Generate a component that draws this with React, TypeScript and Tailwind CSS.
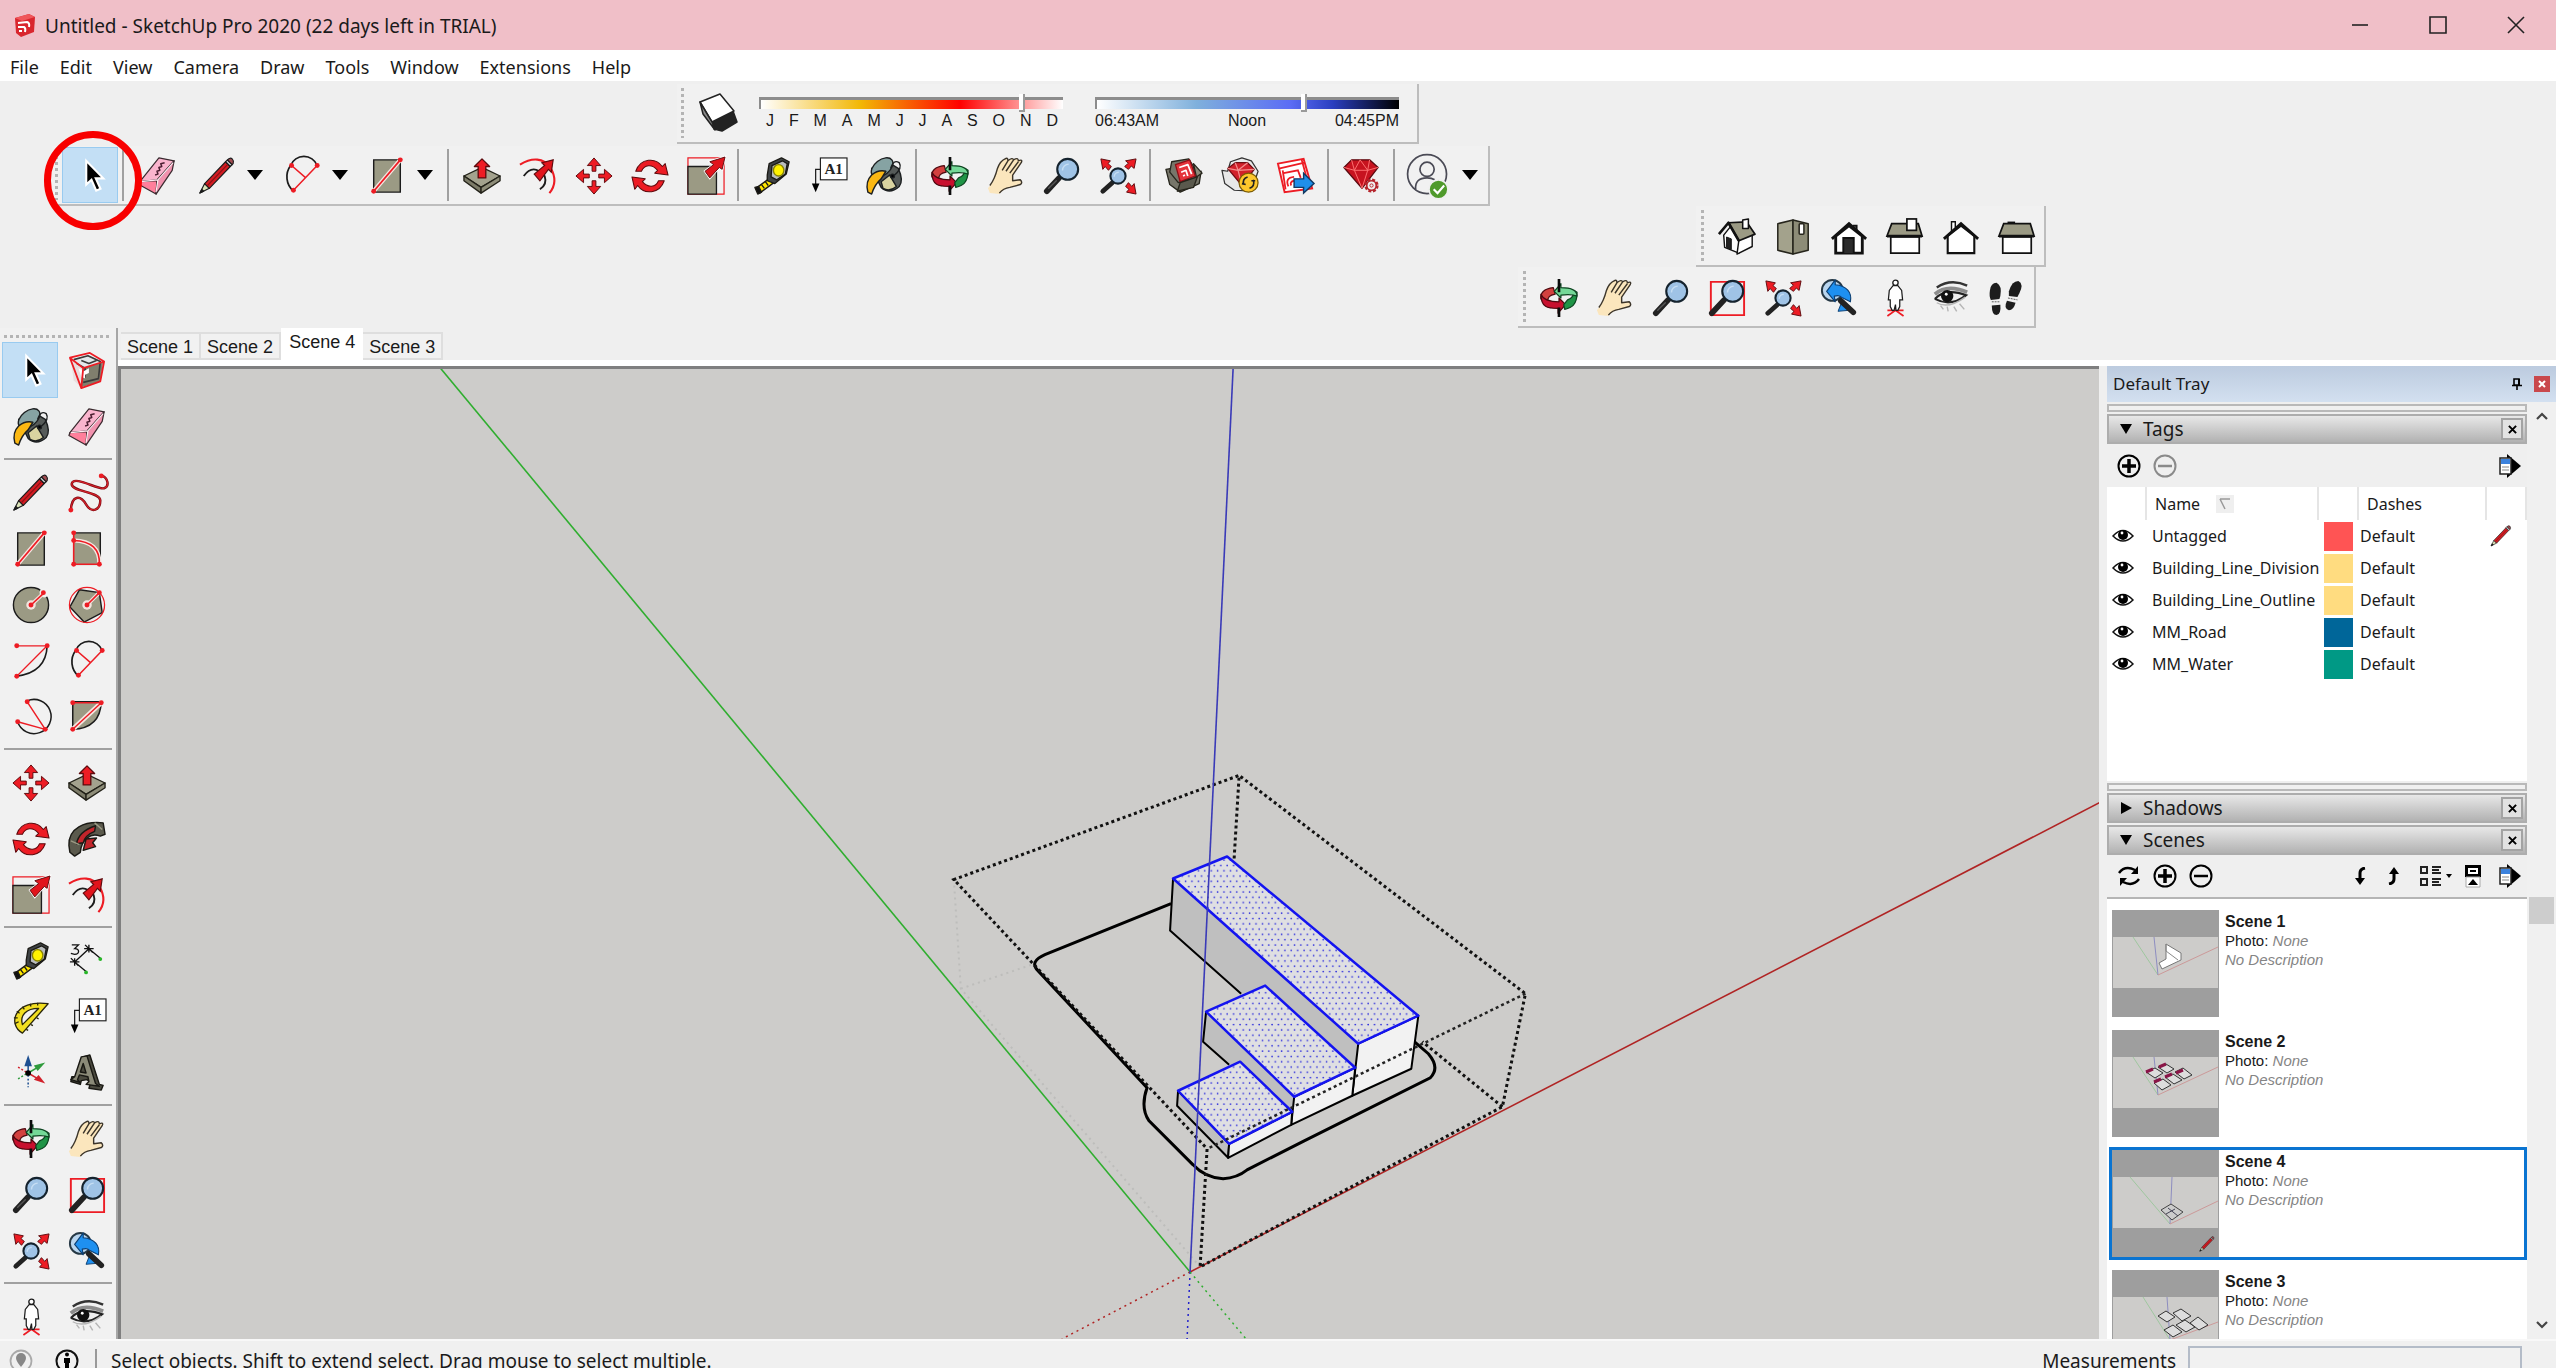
import type { ReactNode } from "react";

const INK = "#1c1c1c";
const RED = "#ed1c24";
const STONE = "#9b9a84";

const Dot = ({ x, y }: { x: number; y: number }) => <circle cx={x} cy={y} r="2.6" fill={RED} />;

const Lens = ({ cx, cy, r }: { cx: number; cy: number; r: number }) => (
  <g>
    <circle cx={cx} cy={cy} r={r} fill="#9fc3e6" stroke="#15232e" strokeWidth="2.2" />
    <path d={`M${cx - r * 0.5} ${cy + r * 0.1}a${r * 0.6} ${r * 0.6} 0 0 1 ${r * 0.6}-${r * 0.6}`} fill="none" stroke="#c5ddf3" strokeWidth="1.5" />
  </g>
);

const Pencil = () => (
  <g stroke={INK} strokeWidth="1.2" strokeLinejoin="round">
    <path d="M2 38L7 28L12 33Z" fill="#dbe3b8" />
    <path d="M2 38l2-4l2 2Z" fill="#111" />
    <path d="M7 28L29 5L34 10L12 33Z" fill="#d31c22" />
    <path d="M29 5l2-2l5 5l-2 2Z" fill="#c9ced2" />
    <path d="M31 3q3-3 5-1t1 5l-1 1Z" fill="#a04b50" />
    <path d="M10 30L31 8" stroke="#8d0f14" fill="none" />
  </g>
);

const ICONS: Record<string, ReactNode> = {
  select: <path d="M15 4v25l5.500-5l5 11.500l4.500-2l-5-11h8Z" fill="#000" stroke="#fff" strokeWidth="2.200" />,
  eraser: (
    <g stroke="#3a2a2f" strokeWidth="1.300" strokeLinejoin="round">
      <path d="M2 26L22 1L38 4L20 24Z" fill="#f9b4cd" />
      <path d="M2 26L20 25L19 39L1 29Z" fill="#ff7f9b" />
      <path d="M20 25L38 4L36 14L19 39Z" fill="#f192ae" />
      <path d="M3 26L21 24L37 6M21 24L19 37" stroke="#ffe9f1" fill="none" />
      <path d="M18 19l3-1l-1-3l3-1l-1-3l3-1l-1-3l4-1" fill="none" stroke="#4b1e31" strokeWidth="1.600" />
    </g>
  ),
  pencil: <Pencil />,
  arc: (
    <g fill="none">
      <path d="M11 36A20 20 0 0 1 8 9A15 15 0 0 1 36 9" stroke={INK} strokeWidth="1.800" />
      <path d="M36 9L11 35M9 9L24 22" stroke={RED} strokeWidth="1.600" />
      <Dot x={36} y={9} /><Dot x={9} y={9} /><Dot x={11} y={35} />
    </g>
  ),
  rect: (
    <g>
      <path d="M6 3H34V37H6Z" fill={STONE} stroke={INK} strokeWidth="1.500" />
      <path d="M6 36L34 3" stroke="#f6e7e2" strokeWidth="4.500" />
      <path d="M6 36L34 3" stroke={RED} strokeWidth="1.800" />
      <Dot x={6} y={36} /><Dot x={34} y={3} />
    </g>
  ),
  rotrect: (
    <g fill="none">
      <path d="M6 3H34V37H6Z" fill={STONE} />
      <path d="M8 3H34V32" stroke={INK} strokeWidth="1.500" />
      <path d="M6 11Q34 12 33 36" stroke="#f6e7e2" strokeWidth="4.500" />
      <path d="M6 3V36H33Q34 12 6 11" stroke={RED} strokeWidth="1.700" />
      <Dot x={6} y={3} /><Dot x={6} y={11} /><Dot x={6} y={36} /><Dot x={33} y={36} />
    </g>
  ),
  circle: (
    <g>
      <circle cx="20" cy="20" r="18.500" fill={STONE} stroke={INK} strokeWidth="1.500" />
      <circle cx="20" cy="20" r="5" fill="#f2e4de" /><circle cx="34" cy="7" r="5" fill="#f2f2f2" />
      <path d="M20 20L34 7" stroke="#f2e4de" strokeWidth="4" />
      <path d="M20 20L34 7" stroke={RED} strokeWidth="1.700" />
      <Dot x={20} y={20} /><Dot x={33} y={7} />
    </g>
  ),
  polygon: (
    <g>
      <path d="M12 4L33 7L36 28L17 38L2 22Z" fill={STONE} stroke={INK} strokeWidth="1.500" />
      <circle cx="20" cy="20" r="18.500" fill="none" stroke={RED} strokeWidth="1.300" />
      <circle cx="20" cy="20" r="5" fill="#f2e4de" />
      <path d="M20 20L33 7" stroke="#f2e4de" strokeWidth="4" />
      <path d="M20 20L33 7" stroke={RED} strokeWidth="1.700" />
      <Dot x={20} y={20} /><Dot x={33} y={7} />
    </g>
  ),
  arc1: (
    <g fill="none">
      <path d="M5 36Q36 32 37 4" stroke={INK} strokeWidth="1.700" />
      <path d="M5 4H37L5 36" stroke={RED} strokeWidth="1.300" />
      <Dot x={5} y={4} /><Dot x={37} y={4} /><Dot x={5} y={36} />
    </g>
  ),
  arc3: (
    <g fill="none">
      <path d="M16 3A18 18 0 1 1 6 25" stroke={INK} strokeWidth="1.600" />
      <path d="M16 4L35 33L6 25" stroke={RED} strokeWidth="1.500" />
      <Dot x={16} y={4} /><Dot x={35} y={33} /><Dot x={6} y={25} />
    </g>
  ),
  pie: (
    <g fill="none">
      <path d="M5 4H35Q34 32 5 33Z" fill={STONE} stroke={INK} strokeWidth="1.600" />
      <path d="M35 5L5 33" stroke="#f6e7e2" strokeWidth="5" />
      <path d="M5 33L35 5H5" stroke={RED} strokeWidth="1.500" />
      <Dot x={5} y={5} /><Dot x={35} y={5} /><Dot x={5} y={33} />
    </g>
  ),
  freehand: (
    <g fill="none">
      <path d="M3 38C4 22 13 22 19 32S34 38 34 28S2 19 4 10S32 17 38 15S42 4 36 2" stroke="#7d0c12" strokeWidth="2.600" />
      <path d="M3 38C4 22 13 22 19 32S34 38 34 28S2 19 4 10S32 17 38 15S42 4 36 2" stroke="#d5202a" strokeWidth="1.200" />
      <Dot x={3} y={38} /><Dot x={35} y={2} />
    </g>
  ),
  pushpull: (
    <g stroke="#222118" strokeWidth="1.400" strokeLinejoin="round">
      <path d="M1 20L20 11L39 20L19 32Z" fill="#a3a28e" />
      <path d="M1 20L19 32V38L1 25Z" fill="#7c7b68" />
      <path d="M19 32L39 20V25L19 38Z" fill="#8e8d79" />
      <path d="M16 22V10H12L20 2L28 10H24V22Z" fill={RED} stroke="#5e0a0d" />
    </g>
  ),
  offset: (
    <g fill="none">
      <path d="M5 20Q15 6 27 20Q30 29 22 34" stroke={INK} strokeWidth="2" />
      <path d="M1 8C14 0 26 1 33 11Q42 26 32 38" stroke={RED} strokeWidth="2.200" />
      <path d="M16 18L27 9L24 6L36 3L34 16L31 13L22 25Z" fill="#e1141c" stroke="#5e0a0d" strokeWidth="1.200" />
    </g>
  ),
  move: (
    <g fill={RED} stroke="#5e0a0d" strokeWidth="1">
      {[0, 90, 180, 270].map((a) => (
        <path key={a} transform={`rotate(${a} 20 20)`} d="M18 15V9H13L20 1L27 9H22V15Z" />
      ))}
    </g>
  ),
  rotate: (
    <g fill={RED} stroke="#5e0a0d" strokeWidth="1.100" strokeLinejoin="round">
      <path d="M5 15C10 1 26 0 33 10L36 7L39 19L25 17L28 14C22 7 14 8 11 15Z" />
      <path d="M35 25C30 39 14 40 7 30L4 34L1 21L15 23L12 26C18 33 26 32 29 25Z" />
    </g>
  ),
  scale: (
    <g>
      <path d="M1 1H39V39H1Z" fill="none" stroke={RED} strokeWidth="1.300" />
      <path d="M1 10H31V39H1Z" fill={STONE} stroke={INK} strokeWidth="1.400" />
      <path d="M19 15L28 8L24 5L40 0L37 13L34 11L24 22Z" fill="#e1141c" stroke="#fff" strokeWidth="2.400" />
      <path d="M19 15L28 8L24 5L40 0L37 13L34 11L24 22Z" fill="#e1141c" stroke="#5e0a0d" />
    </g>
  ),
  followme: (
    <g stroke="#1b1a15" strokeWidth="1.500" strokeLinejoin="round">
      <path d="M1 27C0 8 18 1 37 3L39 15L34 17C24 13 14 20 13 34L7 38L2 34Z" fill="#5b5a4d" />
      <path d="M9 25Q11 12 29 6L28 12Q18 16 16 24Z" fill="#c3252b" />
      <path d="M19 20L16 32L29 28L26 24L30 19Z" fill="#c3252b" />
      <path d="M28 3l8 7M3 22l9 4" stroke="#9b9a84" fill="none" />
    </g>
  ),
  tape: (
    <g stroke="#1b1a15" strokeWidth="1.400" strokeLinejoin="round">
      <path d="M3 33L18 22L22 27L7 38Z" fill="#ffe600" />
      <path d="M2 32l3 7l4-2l-3-6Z" fill="#111" />
      <path d="M9 29l3 4M13 26l3 4" fill="none" />
      <path d="M15 19L17 7L30 1L38 5L35 18L23 28L15 25Z" fill="#3f4345" />
      <path d="M20 9L31 4L36 7L34 18L25 24L19 21Z" fill="#b9bcbe" />
      <ellipse cx="27" cy="14" rx="5.500" ry="6" fill="#fff200" stroke="#8a8400" />
    </g>
  ),
  dimension: (
    <g stroke="#111" strokeWidth="1.400" fill="none">
      <path d="M7 21L22 7M7 21L19 31M22 7L34 17M3 17l8 8M18 3l8 8M2 21h10M17 7h10M7 17v8M22 3v8" />
      <path d="M4 3h7l-4 4c6 0 5 6 0 6l-4-1" />
      <circle cx="34" cy="18" r="2" fill="#28b628" stroke="none" /><circle cx="19" cy="32" r="2" fill="#28b628" stroke="none" />
    </g>
  ),
  protractor: (
    <g stroke="#28250b" strokeWidth="1.400" strokeLinejoin="round">
      <path d="M11 37C-5 28 2 1 38 6Z" fill="#f2df21" />
      <path d="M11 28C8 18 15 11 28 11Z" fill="#f2f2f2" />
      <path d="M3 27l4-2M2 21l4 0M5 14l3 2M11 9l2 3M19 6l1 3M27 5v3M15 33l2 1M20 28l2 1M26 21l2 1" fill="none" />
    </g>
  ),
  text: (
    <g>
      <rect x="12" y="1" width="28" height="23" fill="#fff" stroke={INK} strokeWidth="1.200" />
      <text x="26" y="18" textAnchor="middle" fontSize="16" fontFamily="'Liberation Serif', serif" fontWeight="700" fill="#222">A1</text>
      <path d="M12 13H7V30" fill="none" stroke={INK} strokeWidth="1.300" />
      <path d="M3 28H11L7 37Z" fill="#000" />
    </g>
  ),
  axes: (
    <g fill="none" strokeWidth="1.600">
      <path d="M17 20V8" stroke="#1d4f91" /><path d="M13 13L17 1L21 13Z" fill="#1d4f91" />
      <path d="M17 20L27 14" stroke="#2e9a3b" /><path d="M23 12L35 9L27 18Z" fill="#2e9a3b" />
      <path d="M17 20L27 26" stroke="#d2202a" /><path d="M23 27L35 31L28 22Z" fill="#d2202a" />
      <path d="M17 22V35" stroke="#1d4f91" strokeDasharray="2 2" />
      <path d="M15 21L5 27" stroke="#2e9a3b" strokeDasharray="2 2" />
      <path d="M15 19L5 13" stroke="#d2202a" strokeDasharray="2 2" />
      <circle cx="17" cy="20" r="3" fill="#000" />
    </g>
  ),
  text3d: (
    <g stroke="#191813" strokeWidth="1.500" strokeLinejoin="round" fillRule="evenodd">
      <path d="M16 3L23 1L33 32L37 33L35 38L22 36L24 30L20 27L14 28L13 32L3 29L4 24L8 24Z" fill="#4b4a3f" />
      <path d="M14 3L20 2L29 31L33 34L19 32L22 29L21 24L12 22L10 27L13 30L3 27L7 24ZM16 10L13 19L19 20Z" fill="#8b8a78" />
    </g>
  ),
  orbit: (
    <g strokeWidth="1.300" strokeLinejoin="round">
      <path d="M14 9C4 10 0 15 1 21L8 24C8 19 10 17 16 16Z" fill="#d3413f" stroke="#4d0a10" />
      <path d="M1 16C1 30 8 31 19 31V36L27 27L20 20V24C9 24 3 21 1 16Z" fill="#c8102e" stroke="#4d0a10" />
      <path d="M39 14C39 28 33 30 26 32L25 27L29 22C34 20 36 17 36 12Z" fill="#1f9446" stroke="#0d4420" />
      <path d="M15 13L22 5V9C33 9 39 12 39 18C34 16 29 16 22 17V20Z" fill="#74d897" stroke="#0d4420" />
      <path d="M20 0V14M20 30V40" stroke="#0b0b0b" strokeWidth="2.800" />
    </g>
  ),
  hand: (
    <g strokeLinejoin="round">
      <path d="M1 33C6 27 9 20 11 12Q14 4 19 2Q22 0 22 4Q27 0 28 3Q33 0 33 4Q38 2 36 6L27 19V25L35 24Q38 27 35 29L24 32Q17 33 13 39L3 38Z" fill="#fbe6bd" />
      <path d="M3 30C7 25 9 20 11 12Q14 4 19 2Q22 0 22 4Q27 0 28 3Q33 0 33 4Q38 2 36 6L27 19V25L35 24Q38 27 35 29L24 32Q17 33 13 38M22 4L16 14M28 3L20 15M33 5L24 17" fill="none" stroke="#3c352a" strokeWidth="1.500" />
    </g>
  ),
  zoom: (
    <g>
      <path d="M4 36L17 22" stroke="#222" strokeWidth="6" strokeLinecap="round" />
      <path d="M6 33L14 25" stroke="#555" strokeWidth="1.500" strokeLinecap="round" />
      <Lens cx={26} cy={13} r={11} />
    </g>
  ),
  zoomwindow: (
    <g>
      <path d="M3 3H38V38H3Z" fill="none" stroke={RED} strokeWidth="2" />
      <path d="M4 36L17 22" stroke="#222" strokeWidth="6" strokeLinecap="round" />
      <Lens cx={26} cy={13} r={11} />
    </g>
  ),
  extents: (
    <g>
      <path d="M4 36L14 27" stroke="#222" strokeWidth="5" strokeLinecap="round" />
      <Lens cx={20} cy={20} r={8} />
      {[0, 90, 270].map((a) => (
        <path key={a} transform={`rotate(${a} 20.500 20.500)`} d="M39 2L37 12L34 9.500L31 13L27 10L31 6.500L28 4Z" fill={RED} stroke="#5e0a0d" />
      ))}
    </g>
  ),
  previous: (
    <g strokeLinejoin="round">
      <circle cx="13" cy="12" r="11" fill="#b9d5ee" stroke="#263845" strokeWidth="2" />
      <path d="M7 13L16 1V6C28 7 34 14 32 24L22 19C21 17 19 17 15 18L16 24Z" fill="#1e90f0" stroke="#0c3f73" strokeWidth="1.200" />
      <path d="M19 34L23 24L30 33Z" fill="#1e90f0" stroke="#0c3f73" />
      <path d="M22 23L35 35" stroke="#222" strokeWidth="6" strokeLinecap="round" />
    </g>
  ),
  position: (
    <g>
      <path d="M12 39L20.500 33L29 39M12 33H29" fill="none" stroke={RED} strokeWidth="1.800" />
      <circle cx="20.500" cy="4" r="2.800" fill="#fff" stroke={INK} strokeWidth="1.400" />
      <path d="M18 7H23L27 12L28 22H25V29L23 33H21L20.500 27L19 33H17L15 29V22H13L14 12Z" fill="#fff" stroke={INK} strokeWidth="1.300" />
    </g>
  ),
  look: (
    <g fill="none">
      <path d="M5 9Q20-1 37 7" stroke="#333" strokeWidth="2.500" />
      <path d="M3 16Q16 5 37 14" stroke="#8c8c8c" strokeWidth="4" />
      <path d="M3 21Q14 9 36 17Q20 30 3 21" fill="#eee" stroke="#222" strokeWidth="2.200" />
      <circle cx="16" cy="18" r="6.500" fill="#111" /><circle cx="15" cy="16" r="1.500" fill="#fff" />
      <path d="M5 25Q17 32 35 19M9 28l3 4M16 29l1 5M23 29l3 5M29 26l5 6" stroke="#b5b5b5" strokeWidth="1.500" />
    </g>
  ),
  walk: (
    <g fill="#1d1d1d">
      <path d="M2 12Q3 4 9 4Q15 7 13 18L12 21L3 22Q1 18 2 12Z" /><path d="M4 28L13 27Q14 37 9 38Q4 38 4 28Z" />
      <path d="M22 13Q25 2 32 2Q38 5 33 15L31 19L22 18Z" /><path d="M20 23L29 25Q27 33 22 33Q16 31 20 23Z" />
      <path d="M4 24h9M21 20l10 2" stroke="#555" strokeDasharray="2 1" />
    </g>
  ),
  component: (
    <g strokeLinejoin="round">
      <path d="M3 7L16 17L14 37L6 30Z" fill="#e8dede" /><path d="M16 17L37 10L34 31L14 37Z" fill="#807f6e" />
      <path d="M5 8L21 3L36 10L16 16Z" fill="#e4e8ea" />
      <path d="M6 8L21 4L34 10L32 28L16 32M9 12l9 5v10M14 9l8 3l8-3" fill="none" stroke="#3a3a3a" strokeWidth="1.700" />
      <path d="M11 17l6 3l5-3v5l-4 2v4l-4-2Z" fill="#fff" />
      <path d="M2 6L23 1L38 10L16 17ZM2 6L14 38L34 31L38 10M16 17L14 38" fill="none" stroke={RED} strokeWidth="1.900" />
    </g>
  ),
  paint: (
    <g strokeLinejoin="round" stroke="#1c1f20" strokeWidth="1.500">
      <path d="M7 12L17 32Q26 40 36 31Q41 25 35 12L22 4Z" fill="#565b59" />
      <path d="M17 26L26 19L33 31Q26 37 19 33Z" fill="#d9d3a0" />
      <ellipse cx="18" cy="11" rx="13" ry="8" transform="rotate(-38 18 11)" fill="#86a3a3" />
      <path d="M22 15Q14 13 7 19Q0 26 3 37L7 39Q10 29 17 23Z" fill="#fbb813" />
      <path d="M27 12Q30 2 36 6Q40 12 30 20" fill="none" />
      <circle cx="29" cy="20" r="2" fill="#000" />
    </g>
  ),
  warehouse: (
    <g strokeLinejoin="round" stroke="#26251c" strokeWidth="1.400">
      <path d="M1 13L7 12L16 25L33 19L38 15L36 28L16 37L5 29Z" fill="#77766a" />
      <path d="M7 5L25 2L30 10L32 22L14 27L5 16Z" fill="#77766a" />
      <path d="M30 7L39 17L33 21Z" fill="#8d8c7b" />
      <path d="M11 8L26 3L32 20L16 26Z" fill="#e5333b" stroke="#8e1017" />
      <path d="M15 11L24 8L28 18M17 16l5-2l2 6M19 20l2-1" fill="none" stroke="#fff" strokeWidth="1.800" />
      <path d="M16 27L34 21L30 32L13 36Z" fill="#5a594d" />
    </g>
  ),
  extwarehouse: (
    <g strokeLinejoin="round" stroke="#333" strokeWidth="1.300">
      <path d="M1 14L7 15L10 5L22 1L32 4L39 15L32 36L14 35L4 28Z" fill="#e8e8e8" />
      <path d="M7 12L15 6L28 6L35 13L22 30Z" fill="#d2202a" stroke="#6d0c12" />
      <path d="M7 12L18 14L35 13M15 6L18 14L28 6M18 14L22 30" fill="none" stroke="#f38d8d" />
      <circle cx="29" cy="27" r="10" fill="#fdc72c" stroke="#7a5a00" />
      <path d="M24 29Q22 23 28 21M34 24Q36 31 30 33M22 28l4 1M32 25l4 0" fill="none" stroke="#222" strokeWidth="1.700" />
    </g>
  ),
  layout: (
    <g>
      <path d="M1 7L28 2L37 33L8 37Z" fill="#fff" stroke={RED} strokeWidth="2" />
      <path d="M3 12L29 6M26 3L34 32M7 17L22 14L25 22M9 34L6 14M12 31Q8 22 18 21M15 30Q13 26 18 25" fill="none" stroke={RED} strokeWidth="1.900" />
      <path d="M18 23H28V17L39 28L28 38V32H18Z" fill="#1f8fea" stroke="#123a63" strokeWidth="1.500" />
    </g>
  ),
  ruby: (
    <g strokeLinejoin="round">
      <path d="M1 11L9 3L28 3L37 11L20 33Z" fill="#c7131f" stroke="#5b0a10" strokeWidth="1.400" />
      <path d="M1 11L12 14L26 14L37 11M9 3L12 14L18 3L26 14L28 3M12 14L20 33L26 14" fill="none" stroke="#ff7474" />
      <circle cx="30" cy="30" r="6" fill="#fff" stroke="#b5252c" strokeWidth="3" strokeDasharray="3 1.700" />
      <circle cx="30" cy="30" r="5" fill="#f0f0f0" stroke="#b5252c" strokeWidth="1.800" /><circle cx="30" cy="30" r="1.700" fill="none" stroke="#b5252c" />
    </g>
  ),
  user: (
    <g fill="none" stroke="#4a4a55" strokeWidth="1.800">
      <circle cx="19" cy="18" r="20.500" /><circle cx="19" cy="13" r="7.500" />
      <path d="M7 34Q6 22 19 22Q24 22 27 24" />
      <circle cx="31" cy="34" r="10" fill="#4f9a2b" stroke="#efefef" /><path d="M26 34l4 4l7-8" stroke="#fff" strokeWidth="2.200" />
    </g>
  ),
  iso: (
    <g stroke="#111" strokeLinejoin="round">
      <path d="M6 18L14 8L22 21V37L7 31Z" fill="#fff" strokeWidth="1.500" /><path d="M22 23L36 15V30L20 38Z" fill="#fff" strokeWidth="1.500" />
      <path d="M9 20L14 22V33L9 31Z" fill="#222" />
      <path d="M11 5L30 4L39 17L22 24Z" fill={STONE} strokeWidth="1.800" /><path d="M1 17L11 5L22 24" fill="none" strokeWidth="2.800" />
      <path d="M26 2L32 1V11H26Z" fill="#fff" strokeWidth="1.600" />
    </g>
  ),
  top: (
    <g stroke="#26251c" strokeWidth="1.600" strokeLinejoin="round">
      <path d="M4 6L20 2V38L4 34Z" fill="#a3a28c" /><path d="M20 2L36 6V34L20 38Z" fill="#8d8c77" />
      <rect x="26.500" y="6" width="5" height="11" rx="1" fill="#fff" />
    </g>
  ),
  front: (
    <g stroke="#111" strokeLinejoin="miter">
      <path d="M24 8H28V14" fill="#777" strokeWidth="2" />
      <path d="M6 19L20 8L34 19V37H6Z" fill="#fff" strokeWidth="3" /><path d="M14 37V21H25V37" fill="#2b2b2b" strokeWidth="2" />
      <path d="M2 22L20 6L38 22" fill="none" strokeWidth="3" />
    </g>
  ),
  right: (
    <g stroke="#111" strokeWidth="1.800">
      <path d="M5 20H35V37H5Z" fill="#fff" /><path d="M6 6H34L38 19H1Z" fill={STONE} /><path d="M1 19H38" strokeWidth="3" /><rect x="22" y="1" width="10" height="12" fill="#fff" />
    </g>
  ),
  back: (
    <g stroke="#111">
      <path d="M10 14V4H14V10" fill="#fff" strokeWidth="1.500" />
      <path d="M6 19L20 8L34 19V37H6Z" fill="#fff" strokeWidth="2.200" /><path d="M2 22L20 6L38 22" fill="none" strokeWidth="3" />
    </g>
  ),
  left: (
    <g stroke="#111" strokeWidth="1.800">
      <path d="M10 5H18" strokeWidth="2.500" /><path d="M5 20H35V37H5Z" fill="#fff" /><path d="M6 6H34L38 19H1Z" fill={STONE} /><path d="M1 19H38" strokeWidth="3" />
    </g>
  ),
  shadow: (
    <g stroke="#222" strokeWidth="1.500" strokeLinejoin="round">
      <path d="M14 29L35 18L39 29L24 38L16 36Z" fill="#222" /><path d="M2 9L22 1L36 18L14 29Z" fill="#fff" />
      <path d="M2 9L14 29L17 37L5 21Z" fill="#8b8b8b" />
    </g>
  ),
};

const Icon = ({ name, className = "size-10" }: { name: string; className?: string }) => (
  <svg viewBox="0 0 40 40" className={`${className} shrink-0 overflow-visible`} aria-hidden="true">
    {ICONS[name]}
  </svg>
);

function ToolButton({ name, selected }: { name: string; selected?: boolean }) {
  return (
    <button
      aria-label={name}
      aria-pressed={selected}
      className={`flex h-14 w-14 shrink-0 items-center justify-center border pt-[2px] pl-[2px] ${selected ? "border-[#99cbf0] bg-[#c3dff5]" : "border-transparent"}`}
    >
      <Icon name={name} className="size-[38px]" />
    </button>
  );
}

const Caret = ({ label }: { label: string }) => (
  <button aria-label={label} className="flex h-14 w-[29px] items-center pl-[3px]">
    <svg viewBox="0 0 16 10" className="h-[10px] w-4"><path d="M0 0H16L8 10Z" /></svg>
  </button>
);

const VSep = () => <div className="mx-[4px] h-[52px] w-[2px] bg-[#a0a0a0]" />;
const HSep = () => <div className="col-span-2 mx-[2px] my-[4px] h-[2px] bg-[#a0a0a0]" />;
const Grip = () => <div className="my-1 w-[3px] self-stretch bg-[repeating-linear-gradient(#b4b4b4_0_3px,transparent_3px_6px)]" />;

function Toolbar({ children, className = "" }: { children: ReactNode; className?: string }) {
  return (
    <div role="toolbar" className={`flex w-fit items-center border-r-2 border-b-2 border-[#bdbdbd] bg-[#f1f1f1] ${className}`}>
      {children}
    </div>
  );
}

const sliderClass =
  "block h-[18px] w-full appearance-none bg-transparent " +
  "[&::-webkit-slider-runnable-track]:h-3 [&::-webkit-slider-runnable-track]:border-t-3 [&::-webkit-slider-runnable-track]:border-l-2 [&::-webkit-slider-runnable-track]:border-[#8c8c8c] " +
  "[&::-webkit-slider-thumb]:-mt-[6px] [&::-webkit-slider-thumb]:h-[18px] [&::-webkit-slider-thumb]:w-[6px] [&::-webkit-slider-thumb]:appearance-none [&::-webkit-slider-thumb]:border-r-2 [&::-webkit-slider-thumb]:border-b-2 [&::-webkit-slider-thumb]:border-[#9a9a9a] [&::-webkit-slider-thumb]:bg-white ";

function ShadowBar() {
  return (
    <Toolbar className="ml-[677px] h-[60px] pr-[18px] pl-1">
      <Grip />
      <button aria-label="Show shadows" className="ml-[14px] flex h-14 w-10 items-center justify-center">
        <Icon name="shadow" />
      </button>
      <div className="ml-[21px] w-[304px] pb-1 text-[16px] leading-[17px]">
        <input type="range" aria-label="Month" defaultValue={87} className={`${sliderClass} [&::-webkit-slider-runnable-track]:bg-[linear-gradient(90deg,#fff,#f2b705_33%,#f00_66%,#fff)]`} />
        <div className="flex justify-between pr-[5px] pl-[7px]">
          {"JFMAMJJASOND".split("").map((m, i) => (
            <span key={i}>{m}</span>
          ))}
        </div>
      </div>
      <div className="ml-8 w-[304px] pb-1 text-[16px] leading-[17px]">
        <input type="range" aria-label="Time of day" defaultValue={69} className={`${sliderClass} [&::-webkit-slider-runnable-track]:bg-[linear-gradient(90deg,#fff,#7fb0dc_33%,#5b6df5_64%,#2a3fc0_78%,#000)]`} />
        <div className="flex justify-between">
          <span>06:43AM</span><span>Noon</span><span>04:45PM</span>
        </div>
      </div>
    </Toolbar>
  );
}

function MainBar() {
  return (
    <Toolbar className="mt-[2px] ml-[52px] h-[60px] pl-[3px]">
      <Grip />
      <div className="w-1" />
      <ToolButton name="select" selected />
      <VSep />
      <ToolButton name="eraser" />
      <div className="w-1" />
      <ToolButton name="pencil" /><Caret label="Line tools" />
      <ToolButton name="arc" /><Caret label="Arc tools" />
      <ToolButton name="rect" /><Caret label="Shape tools" />
      <VSep />
      {["pushpull", "offset", "move", "rotate", "scale"].map((n) => <ToolButton key={n} name={n} />)}
      <VSep />
      {["tape", "text", "paint"].map((n) => <ToolButton key={n} name={n} />)}
      <VSep />
      {["orbit", "hand", "zoom", "extents"].map((n) => <ToolButton key={n} name={n} />)}
      <VSep />
      {["warehouse", "extwarehouse", "layout"].map((n) => <ToolButton key={n} name={n} />)}
      <VSep />
      <ToolButton name="ruby" />
      <VSep />
      <ToolButton name="user" />
      <div className="w-1" />
      <Caret label="Account" />
    </Toolbar>
  );
}

const SIDE_GROUPS = [
  ["select", "component", "paint", "eraser"],
  ["pencil", "freehand", "rect", "rotrect", "circle", "polygon", "arc1", "arc", "arc3", "pie"],
  ["move", "pushpull", "rotate", "followme", "scale", "offset"],
  ["tape", "dimension", "protractor", "text", "axes", "text3d"],
  ["orbit", "hand", "zoom", "zoomwindow", "extents", "previous"],
  ["position", "look"],
];

function SideBar() {
  return (
    <div className="w-[118px] shrink-0 overflow-hidden border-r-2 border-[#a6a6a6] bg-[#f1f1f1] px-[2px] pt-[7px]">
      <div className="mx-[2px] mb-1 h-[3px] bg-[repeating-linear-gradient(90deg,#b4b4b4_0_3px,transparent_3px_6px)]" />
      <div className="grid grid-cols-[56px_56px]">
        {SIDE_GROUPS.map((group, g) => (
          <div key={g} className="contents">
            {g > 0 && <HSep />}
            {group.map((n) => <ToolButton key={n} name={n} selected={n === "select"} />)}
          </div>
        ))}
      </div>
    </div>
  );
}

function Viewport() {
  return (
    <div className="min-w-0 flex-1 overflow-hidden border-t-3 border-l-3 border-[#7f7f7f] bg-[#cdccca]">
      <svg viewBox="121 370 1978 969" preserveAspectRatio="xMidYMin slice" className="h-full w-full" aria-label="Model">
        <defs>
          <pattern id="dots" width="6.400" height="10.600" patternUnits="userSpaceOnUse">
            <rect width="6.400" height="10.600" fill="#dfdfe2" />
            <circle cx="1.500" cy="2" r="0.850" fill="#2c2cdc" />
            <circle cx="4.700" cy="7.300" r="0.850" fill="#2c2cdc" />
          </pattern>
        </defs>
        <g fill="none" strokeWidth="2" stroke="#bdbdbb" strokeDasharray="2 4">
          <path d="M954 880L961 989L1200 1267M961 989L1035 964" />
        </g>
        <path d="M441 369L1190 1272" stroke="#2fae2f" strokeWidth="1.600" />
        <path d="M1190 1272L2099 803" stroke="#b02424" strokeWidth="1.600" />
        <g strokeWidth="1.500" strokeDasharray="2 4">
          <path d="M1190 1272L1062 1339" stroke="#b02424" />
          <path d="M1190 1272L1187 1339" stroke="#2222cc" />
          <path d="M1190 1272L1246 1339" stroke="#2fae2f" />
        </g>
        <path d="M1171 904L1045 955Q1029 962 1038 971L1147 1088Q1140 1108 1149 1121L1193 1165Q1205 1178 1223 1179Q1237 1178 1247 1170L1304 1141L1430 1078Q1440 1068 1428 1054L1414 1042" fill="none" stroke="#000" strokeWidth="3" />
        <g fill="none" stroke="#111" strokeWidth="3" strokeDasharray="3 3">
          <path d="M1234 859L1239 776L954 880L1207 1149L1200 1267L1502 1107L1525 994L1239 776" />
          <path d="M1502 1107L1422 1042" />
        </g>
        <g stroke="#000" strokeWidth="2" strokeLinejoin="round">
          <path d="M1173 879L1358 1044L1355 1068L1265 986L1241 994L1170 931Z" fill="#bfbfbf" stroke="none" />
          <path d="M1173 879L1170 931L1241 994" fill="none" />
          <path d="M1358 1044L1418 1016L1411 1069L1352 1096Z" fill="#f2f2f2" />
          <path d="M1206 1012L1294 1097L1292 1112L1240 1062L1229 1065L1203 1042Z" fill="#bfbfbf" stroke="none" />
          <path d="M1206 1012L1203 1042L1229 1065" fill="none" />
          <path d="M1294 1097L1355 1068L1352 1096L1291 1125Z" fill="#f2f2f2" />
          <path d="M1178 1091L1229 1144L1228 1158L1177 1106Z" fill="#bfbfbf" />
          <path d="M1229 1144L1292 1112L1291 1125L1228 1158Z" fill="#f2f2f2" />
        </g>
        <g fill="url(#dots)" stroke="#1414f0" strokeWidth="2.500" strokeLinejoin="round">
          <path d="M1227 857L1173 879L1358 1044L1418 1016Z" />
          <path d="M1265 986L1206 1012L1294 1097L1355 1068Z" />
          <path d="M1240 1062L1178 1091L1229 1144L1292 1112Z" />
        </g>
        <path d="M1525 994L1207 1149" fill="none" stroke="#222" strokeWidth="2.500" strokeDasharray="3 3" />
        <path d="M1233 369L1190 1272" stroke="#3a3ab8" strokeWidth="1.600" />
      </svg>
    </div>
  );
}

const TAGS = [
  { name: "Untagged", color: "bg-[#ff5454]" },
  { name: "Building_Line_Division", color: "bg-[#ffdc80]" },
  { name: "Building_Line_Outline", color: "bg-[#ffdc80]" },
  { name: "MM_Road", color: "bg-[#006699]" },
  { name: "MM_Water", color: "bg-[#009985]" },
];

const Splitter = () => <div className="mt-[2px] h-2 border-2 border-[#b9b9b9] bg-[#f0f0f0]" />;

function SectionHeader({ title, open }: { title: string; open?: boolean }) {
  return (
    <div className="mt-[2px] flex h-[30px] items-center border-2 border-[#adadad] bg-linear-to-b from-[#e8e8e8] to-[#b2b2b2] pl-[11px]">
      <button className="flex flex-1 items-center gap-[11px] text-left text-[19px] leading-6" aria-expanded={!!open}>
        <svg viewBox="0 0 12 12" className="size-3"><path d={open ? "M0 1H12L6 11Z" : "M1 0V12L12 6Z"} /></svg>
        {title}
      </button>
      <button aria-label={`Close ${title}`} className="mr-[2px] flex size-[22px] items-center justify-center border-2 border-[#a3a3a3] bg-[#e2e2e2]">
        <svg viewBox="0 0 10 10" className="size-[9px]"><path d="M1 1L9 9M9 1L1 9" stroke="#000" strokeWidth="2.200" /></svg>
      </button>
    </div>
  );
}

const CircleButton = ({ label, plus, muted }: { label: string; plus?: boolean; muted?: boolean }) => (
  <button aria-label={label}>
    <svg viewBox="0 0 24 24" className={`size-6 ${muted ? "text-[#8a8a8a]" : "text-black"}`} fill="none" stroke="currentColor">
      <circle cx="12" cy="12" r="10.500" strokeWidth="2" />
      <path d={plus ? "M5 12H19M12 5V19" : "M5 12H19"} strokeWidth={plus ? 3.5 : 2.5} />
    </svg>
  </button>
);

const DetailsButton = () => (
  <button aria-label="Details">
    <svg viewBox="0 0 22 24" className="h-6 w-[22px]">
      <path d="M8 0L22 12L8 24Z" /><rect x="1" y="4" width="11" height="16" fill="#fff" stroke="#222" strokeWidth="1.500" />
      <rect x="2" y="5" width="9" height="5" fill="#3b82dd" /><path d="M3 13H10M3 16H10" stroke="#888" />
    </svg>
  </button>
);

const EyeIcon = () => (
  <svg viewBox="0 0 22 16" className="h-4 w-[22px]">
    <path d="M1 8Q11-3 21 8Q11 18 1 8Z" fill="#fff" stroke="#111" strokeWidth="1.500" />
    <circle cx="11" cy="7" r="5" /><circle cx="10" cy="5" r="1.400" fill="#fff" />
  </svg>
);

function TagsPanel() {
  return (
    <>
      <SectionHeader title="Tags" open />
      <div className="flex h-[43px] items-center gap-3 pr-[6px] pl-[10px]">
        <CircleButton label="Add tag" plus />
        <CircleButton label="Remove tag" muted />
        <div className="flex-1" />
        <DetailsButton />
      </div>
      <div className="h-[294px] bg-white">
        <table className="w-full table-fixed border-collapse text-left text-[16px] leading-5">
          <colgroup>
            <col className="w-[39px]" /><col className="w-[172px]" /><col className="w-10" /><col /><col className="w-10" />
          </colgroup>
          <thead>
            <tr className="h-[33px]">
              <th className="border-r-2 border-[#e5e5e5]" aria-label="Visible" />
              <th className="border-r-2 border-[#e5e5e5] pl-2 font-normal">
                <div className="flex items-center gap-4">
                  Name
                  <button aria-label="Sort" className="flex size-[18px] items-center justify-center bg-[#efefef]">
                    <svg viewBox="0 0 12 12" className="size-3"><path d="M1 1H11M1 1L6 11" fill="none" stroke="#999" strokeWidth="1.500" /></svg>
                  </button>
                </div>
              </th>
              <th className="border-r-2 border-[#e5e5e5]" aria-label="Color" />
              <th className="border-r-2 border-[#e5e5e5] pl-2 font-normal">Dashes</th>
              <th className="border-r-2 border-[#e5e5e5]" aria-label="Active" />
            </tr>
          </thead>
          <tbody>
            {TAGS.map((tag, i) => (
              <tr key={tag.name} className="h-8">
                <td className="pl-[5px]"><EyeIcon /></td>
                <td className="pl-[6px] whitespace-nowrap">{tag.name}</td>
                <td className="pl-[6px]"><div className={`h-[29px] w-[29px] ${tag.color}`} /></td>
                <td className="pl-[2px]">Default</td>
                <td className="pl-1">{i === 0 && <Icon name="pencil" className="size-[22px]" />}</td>
              </tr>
            ))}
          </tbody>
        </table>
      </div>
    </>
  );
}

const THUMBS: Record<string, ReactNode> = {
  "Scene 1": (
    <g>
      <path d="M21 27L46 65" stroke="#9fc79f" /><path d="M42 27L46 65" stroke="#8d8dc0" /><path d="M46 65L106 37" stroke="#c99" />
      <path d="M54 34L69 43V50L50 59L47 53L54 49Z" fill="#fff" stroke="#777" /><path d="M54 34V41L66 50" fill="none" stroke="#888" />
    </g>
  ),
  "Scene 2": (
    <g>
      <path d="M21 27L46 65" stroke="#9fc79f" /><path d="M42 27L46 65" stroke="#8d8dc0" /><path d="M46 65L106 37" stroke="#c99" />
      <g fill="#ddd" stroke="#333">
        <path d="M34 42l9-4l8 5l-8 5Z" /><path d="M46 37l8-3l8 5l-7 4Z" /><path d="M42 53l9-4l8 6l-9 5Z" /><path d="M53 47l8-3l9 6l-8 4Z" /><path d="M63 42l8-4l9 7l-8 4Z" />
      </g>
      <path d="M34 42l7-3M47 37l7-3M42 52l7-3M53 47l7-3M64 43l7-3" stroke="#8a1547" strokeWidth="3" />
    </g>
  ),
  "Scene 4": (
    <g>
      <path d="M18 27L58 74" stroke="#9fc79f" /><path d="M60 27L58 74" stroke="#8d8dc0" /><path d="M58 74L106 51" stroke="#c99" />
      <path d="M49 60L59 54L71 62L60 70Z" fill="#ccc" stroke="#444" /><path d="M56 58L66 66M54 64l9-5" stroke="#445" />
      <svg x="87" y="86" width="16" height="16" viewBox="0 0 40 40"><Pencil /></svg>
    </g>
  ),
  "Scene 3": (
    <g>
      <path d="M31 27L58 70" stroke="#9fc79f" /><path d="M55 27L58 70" stroke="#8d8dc0" /><path d="M58 70L106 52" stroke="#c99" />
      <g fill="#ddd" stroke="#333">
        <path d="M46 46l8-5l9 6l-8 5Z" /><path d="M61 43l8-4l10 7l-9 5Z" /><path d="M52 60l9-5l9 7l-9 5Z" /><path d="M64 55l9-5l10 7l-9 5Z" /><path d="M78 53l8-6l10 8l-9 5Z" />
      </g>
    </g>
  ),
};

function ScenesPanel() {
  return (
    <>
      <SectionHeader title="Scenes" open />
      <div className="flex h-[44px] shrink-0 items-center gap-3 border-b-2 border-[#b5b5b5] pr-[6px] pl-[10px]">
        <button aria-label="Update scene">
          <svg viewBox="0 0 24 24" className="size-6" fill="none" stroke="#000" strokeWidth="2.500">
            <path d="M2 9Q8 1 18 6M22 15Q16 23 6 18" /><path d="M21 2V10H14ZM3 22V14H10Z" fill="#000" stroke="none" />
          </svg>
        </button>
        <CircleButton label="Add scene" plus />
        <CircleButton label="Remove scene" />
        <div className="flex-1" />
        <button aria-label="Move scene down" className="mr-2">
          <svg viewBox="0 0 12 18" className="h-[18px] w-3"><path d="M10 1Q5 2 5 6V12" fill="none" stroke="#000" strokeWidth="3" /><path d="M0 11H10L5 18Z" /></svg>
        </button>
        <button aria-label="Move scene up" className="mr-2">
          <svg viewBox="0 0 12 18" className="h-[18px] w-3"><path d="M2 17Q7 16 7 12V6" fill="none" stroke="#000" strokeWidth="3" /><path d="M2 7H12L7 0Z" /></svg>
        </button>
        <button aria-label="View options">
          <svg viewBox="0 0 34 24" className="h-6 w-[34px]" fill="none" stroke="#222" strokeWidth="2">
            <path d="M2 3H8V9H2ZM2 15H8V21H2ZM13 3H22M13 6H20M13 9H22M13 15H22M13 18H20M13 21H22" /><path d="M27 10H33L30 14Z" fill="#000" stroke="none" />
          </svg>
        </button>
        <button aria-label="Show details" className="mr-[6px]">
          <svg viewBox="0 0 16 24" className="h-6 w-4"><path d="M0 1H16V13H0Z" /><path d="M4 5H12V9H4Z" fill="none" stroke="#fff" strokeWidth="2" /><path d="M1 13H15V23H1Z" fill="#fff" stroke="#aaa" /><path d="M3 21H13L8 15Z" /></svg>
        </button>
        <DetailsButton />
      </div>
      <ul className="min-h-0 flex-1 overflow-hidden bg-white pt-2 pl-[2px] font-['Liberation_Sans',sans-serif]">
        {["Scene 1", "Scene 2", "Scene 4", "Scene 3"].map((name) => (
          <li key={name} className={`mb-[7px] flex h-[113px] gap-[6px] border-3 ${name === "Scene 4" ? "border-[#0a74d1]" : "border-transparent"}`}>
            <svg viewBox="0 0 107 107" className="size-[107px] shrink-0">
              <rect width="107" height="107" fill="#9e9e9e" /><rect x="1" y="27" width="105" height="51" fill="#cdccca" />
              {THUMBS[name]}
            </svg>
            <div className="pt-[2px] text-[15px] leading-[19px]">
              <div className="text-[16px] font-bold">{name}</div>
              <div>Photo: <i className="text-[#858585]">None</i></div>
              <i className="block text-[#858585]">No Description</i>
            </div>
          </li>
        ))}
      </ul>
    </>
  );
}

function Tray() {
  return (
    <aside className="flex w-[457px] shrink-0 flex-col pl-2">
      <div className="flex h-9 shrink-0 items-center bg-linear-to-b from-[#bccbdf] to-[#d3e0f0] pr-[6px] pl-[6px]">
        <h2 className="flex-1 text-[17px]">Default Tray</h2>
        <button aria-label="Pin" className="mr-3">
          <svg viewBox="0 0 10 12" className="h-3 w-[10px]"><path d="M2 1H7V7H2ZM0 7.500H10M5 8V12" fill="none" stroke="#000" strokeWidth="1.600" /><path d="M6 1h2v6h-2Z" /></svg>
        </button>
        <button aria-label="Close tray" className="flex size-4 items-center justify-center bg-[#c9484c]">
          <svg viewBox="0 0 8 8" className="size-2"><path d="M1 1L7 7M7 1L1 7" stroke="#fff" strokeWidth="2" /></svg>
        </button>
      </div>
      <div className="flex min-h-0 flex-1">
        <div className="flex min-w-0 flex-1 flex-col">
          <Splitter />
          <TagsPanel />
          <Splitter />
          <SectionHeader title="Shadows" />
          <ScenesPanel />
        </div>
        <div className="flex w-[29px] flex-col items-center justify-between bg-[#f0f0f0] py-[10px]">
          <svg viewBox="0 0 12 8" className="h-2 w-3"><path d="M1 7L6 2L11 7" fill="none" stroke="#444" strokeWidth="2.200" /></svg>
          <div className="mt-[80px] h-[27px] w-[25px] bg-[#cdcdcd]" />
          <svg viewBox="0 0 12 8" className="h-2 w-3"><path d="M1 1L6 6L11 1" fill="none" stroke="#444" strokeWidth="2.200" /></svg>
        </div>
      </div>
    </aside>
  );
}

const SCENE_TABS = ["Scene 1", "Scene 2", "Scene 4", "Scene 3"];

function SceneTabs() {
  return (
    <div role="tablist" className="flex h-[38px] shrink-0 items-end border-b-6 border-white pl-[3px] font-['Liberation_Sans',sans-serif] text-[18px]">
      {SCENE_TABS.map((tab) => (
        <button
          key={tab}
          role="tab"
          aria-selected={tab === "Scene 4"}
          className={tab === "Scene 4" ? "h-8 bg-white px-2 pb-1" : "h-7 border-2 border-l-0 border-[#dedede] bg-[#f1f1f1] px-[6px]"}
        >
          {tab}
        </button>
      ))}
    </div>
  );
}

export default function App() {
  return (
    <div className="relative h-screen w-full overflow-hidden bg-white pr-1 font-['Noto_Sans','Open_Sans',sans-serif] text-[18px] text-[#1a1a1a]">
      <div className="flex h-full flex-col bg-[#efefef]">
        <header className="flex h-[50px] shrink-0 items-center bg-[#f0bfc8] pl-[14px]">
          <svg viewBox="0 0 22 24" className="h-6 w-[22px]">
            <path d="M1 5L15 1L21 4L20 19L7 24L2 20Z" fill="#d9262e" /><path d="M1 5L15 1L21 4L8 8Z" fill="#f0575b" />
            <path d="M4 10L13 9Q16 10 15 14M4 14L10 14Q12 15 11 19M5 18l3 0" fill="none" stroke="#fff" strokeWidth="2" />
          </svg>
          <h1 className="ml-[9px] flex-1 pt-[2px] text-[19px]">Untitled - SketchUp Pro 2020 (22 days left in TRIAL)</h1>
          <div className="flex items-center gap-[60px] pr-[31px]">
            <button aria-label="Minimize"><svg viewBox="0 0 18 18" className="size-[18px]"><path d="M1 9H17" stroke="#222" strokeWidth="1.600" /></svg></button>
            <button aria-label="Maximize"><svg viewBox="0 0 18 18" className="size-[18px]"><path d="M1 1H17V17H1Z" fill="none" stroke="#222" strokeWidth="1.600" /></svg></button>
            <button aria-label="Close"><svg viewBox="0 0 18 18" className="size-[18px]"><path d="M1 1L17 17M17 1L1 17" stroke="#222" strokeWidth="1.600" /></svg></button>
          </div>
        </header>
        <nav className="flex h-[31px] shrink-0 items-center gap-[21px] bg-white pt-[3px] pl-[10px] text-[18px]">
          {["File", "Edit", "View", "Camera", "Draw", "Tools", "Window", "Extensions", "Help"].map((m) => (
            <button key={m}>{m}</button>
          ))}
        </nav>

        <div className="h-[247px] shrink-0 pt-[3px] font-['Liberation_Sans',sans-serif]">
          <ShadowBar />
          <MainBar />
          <Toolbar className="ml-[1696px] h-[61px] pl-[5px]">
            <Grip />
            <div className="w-1" />
            {["iso", "top", "front", "right", "back", "left"].map((n) => <ToolButton key={n} name={n} />)}
          </Toolbar>
          <Toolbar className="ml-[1518px] h-[61px] pl-[5px]">
            <Grip />
            <div className="w-1" />
            {["orbit", "hand", "zoom", "zoomwindow", "extents", "previous", "position", "look", "walk"].map((n) => <ToolButton key={n} name={n} />)}
          </Toolbar>
        </div>

        <div className="flex min-h-0 flex-1">
          <SideBar />
          <div className="flex min-w-0 flex-1 flex-col">
            <SceneTabs />
            <main className="flex min-h-0 flex-1">
              <Viewport />
              <Tray />
            </main>
          </div>
        </div>

        <footer className="h-[29px] shrink-0 overflow-hidden border-t-2 border-[#f8f8f8] bg-[#f0f0f0]">
          <div className="flex h-10 items-center pr-[34px] pl-[9px] text-[19px]">
            <svg viewBox="0 0 24 24" className="size-6"><circle cx="12" cy="12" r="10.500" fill="none" stroke="#aaa" strokeWidth="1.800" /><path d="M12 4a5 5 0 0 1 5 5q0 3-5 9q-5-6-5-9a5 5 0 0 1 5-5" fill="#888" /></svg>
            <svg viewBox="0 0 24 24" className="ml-[22px] size-6"><circle cx="12" cy="12" r="10.500" fill="none" stroke="#111" strokeWidth="2" /><circle cx="12" cy="5.500" r="2" /><path d="M9 9H15V14H14V20H10V14H9Z" /></svg>
            <div className="ml-4 h-6 w-[2px] bg-[#999]" />
            <p className="ml-[14px] flex-1">Select objects. Shift to extend select. Drag mouse to select multiple.</p>
            <label htmlFor="measure">Measurements</label>
            <input id="measure" className="ml-3 h-[30px] w-[334px] border-2 border-[#b4bcc8] bg-[#f1f1f1]" />
          </div>
        </footer>
      </div>
      <div className="pointer-events-none absolute top-[131px] left-[44px] h-[99px] w-[98px] rounded-full border-[7px] border-[#f80000]" />
    </div>
  );
}
